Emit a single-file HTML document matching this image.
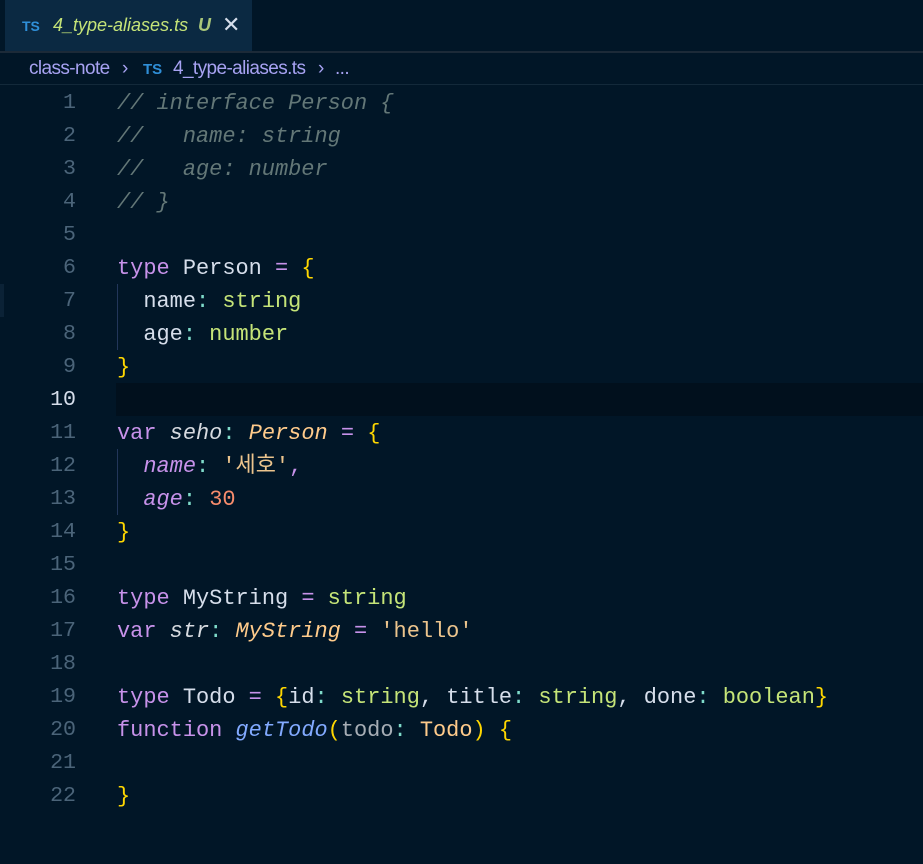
<!DOCTYPE html>
<html><head><meta charset="utf-8"><style>
body{margin:0;width:923px;height:864px;background:#011627;overflow:hidden;position:relative;font-family:"Liberation Mono","Noto Sans CJK KR",monospace}
.tabbar{position:absolute;left:0;top:0;width:923px;height:51px;background:#011627}
.tab{position:absolute;left:5px;top:0;width:247px;height:51px;background:#0b2942;font-family:"Liberation Sans",sans-serif;}
.ts{color:#2f8fd8;font-weight:bold;font-size:14px;font-family:"Liberation Sans",sans-serif}
.tab .ts{position:absolute;left:17px;top:18px}
.tab .name{position:absolute;left:48px;top:15px;color:#c5e478;font-style:italic;font-size:18px}
.tab .u{position:absolute;left:193px;top:15px;color:#a9c77a;font-style:italic;font-weight:bold;font-size:18px}
.tab .x{position:absolute;left:217px;top:12px;color:#d6deeb;font-size:22px}
.sep1{position:absolute;left:0;top:51px;width:923px;height:2px;background:#1c2a38}
.crumb{position:absolute;top:58px;font-family:"Liberation Sans",sans-serif;font-size:19px;color:#a7a2f2;white-space:pre;letter-spacing:-0.6px}
.crumb.ts{font-size:15px;top:61px;color:#2f8fd8;letter-spacing:0}
.sep2{position:absolute;left:0;top:84px;width:923px;height:1px;background:#13293a}
.hl{position:absolute;left:116px;top:383px;width:807px;height:33px;background:#01101d}
.mark{position:absolute;left:0;top:284px;width:4px;height:33px;background:#0b2236}
.guide{position:absolute;left:117px;width:1px;background:#22365a}
.ln{position:absolute;left:0;width:76px;text-align:right;color:#4b6479;font-size:21.6px;line-height:33px}
.code{position:absolute;left:117px;font-size:21.95px;line-height:33px;white-space:pre;color:#d6deeb}
.c{color:#637777;font-style:italic}.k{color:#c792ea}.t{color:#c5e478}.b{color:#ffd700}.o{color:#c792ea}.p{color:#7fdbca}
.v{font-style:italic;color:#d7dbe0}.ty{font-style:italic;color:#ffcb8b}.pr{font-style:italic;color:#c792ea}.s{color:#ecc48d}.n{color:#f78c6c}.f{color:#82aaff;font-style:italic}.g{color:#a6adb5}.tn{color:#ffcb8b}
</style></head><body>
<div class="tabbar"><div class="tab"><span class="ts">TS</span><span class="name">4_type-aliases.ts</span><span class="u">U</span><span class="x">✕</span></div></div>
<div class="sep1"></div>
<div class="crumb" style="left:29px">class-note</div>
<div class="crumb" style="left:122px">›</div>
<div class="crumb ts" style="left:143px">TS</div>
<div class="crumb" style="left:173px">4_type-aliases.ts</div>
<div class="crumb" style="left:318px">›</div>
<div class="crumb" style="left:335px">...</div>
<div class="sep2"></div>
<div class="mark"></div>
<div class="hl"></div>
<div class="guide" style="top:284px;height:66px"></div>
<div class="guide" style="top:449px;height:66px"></div>
<div style="position:absolute;top:87px;left:0">
<div class="ln" style="top:0">1</div><div class="ln" style="top:33px">2</div><div class="ln" style="top:66px">3</div><div class="ln" style="top:99px">4</div><div class="ln" style="top:132px">5</div><div class="ln" style="top:165px">6</div><div class="ln" style="top:198px">7</div><div class="ln" style="top:231px">8</div><div class="ln" style="top:264px">9</div><div class="ln" style="top:297px;color:#d6deeb">10</div><div class="ln" style="top:330px">11</div><div class="ln" style="top:363px">12</div><div class="ln" style="top:396px">13</div><div class="ln" style="top:429px">14</div><div class="ln" style="top:462px">15</div><div class="ln" style="top:495px">16</div><div class="ln" style="top:528px">17</div><div class="ln" style="top:561px">18</div><div class="ln" style="top:594px">19</div><div class="ln" style="top:627px">20</div><div class="ln" style="top:660px">21</div><div class="ln" style="top:693px">22</div>
</div>
<div class="code" style="top:87px"><span class="c">// interface Person {</span>
<span class="c">//   name: string</span>
<span class="c">//   age: number</span>
<span class="c">// }</span>

<span class="k">type</span> Person <span class="o">=</span> <span class="b">{</span>
  name<span class="p">:</span> <span class="t">string</span>
  age<span class="p">:</span> <span class="t">number</span>
<span class="b">}</span>

<span class="k">var</span> <span class="v">seho</span><span class="p">:</span> <span class="ty">Person</span> <span class="o">=</span> <span class="b">{</span>
  <span class="pr">name</span><span class="p">:</span> <span class="s">'세호'</span><span class="k">,</span>
  <span class="pr">age</span><span class="p">:</span> <span class="n">30</span>
<span class="b">}</span>

<span class="k">type</span> MyString <span class="o">=</span> <span class="t">string</span>
<span class="k">var</span> <span class="v">str</span><span class="p">:</span> <span class="ty">MyString</span> <span class="o">=</span> <span class="s">'hello'</span>

<span class="k">type</span> Todo <span class="o">=</span> <span class="b">{</span>id<span class="p">:</span> <span class="t">string</span>, title<span class="p">:</span> <span class="t">string</span>, done<span class="p">:</span> <span class="t">boolean</span><span class="b">}</span>
<span class="k">function</span> <span class="f">getTodo</span><span class="b">(</span><span class="g">todo</span><span class="p">:</span> <span class="tn">Todo</span><span class="b">)</span> <span class="b">{</span>

<span class="b">}</span></div>
</body></html>
